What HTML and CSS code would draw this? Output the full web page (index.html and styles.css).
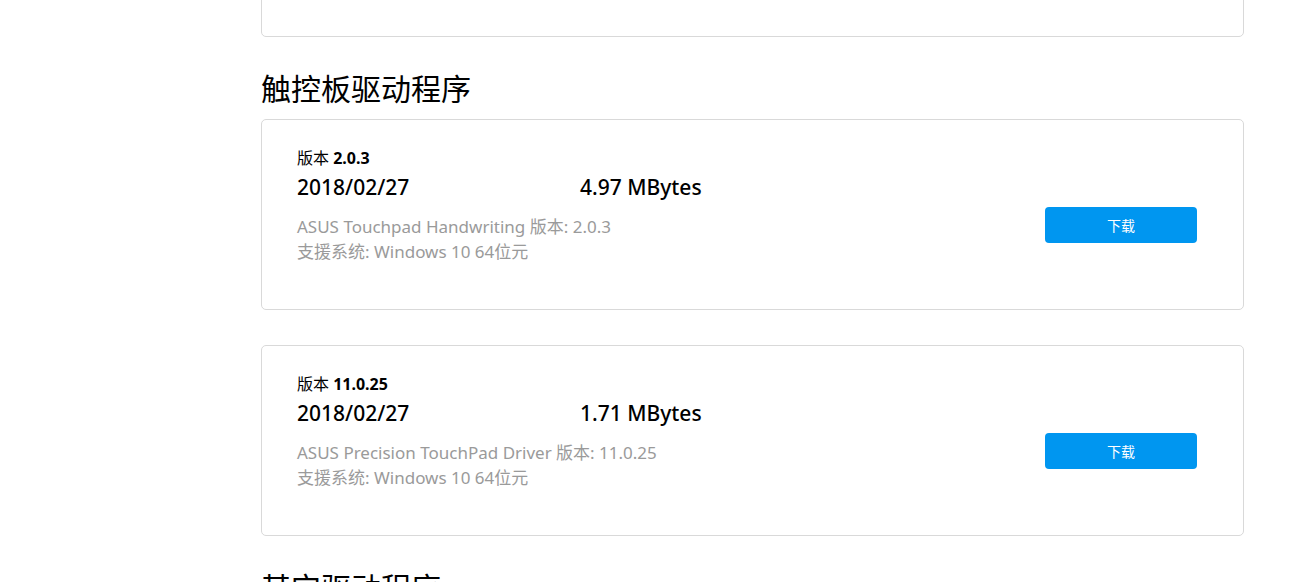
FILE: index.html
```html
<!DOCTYPE html>
<html lang="zh-CN">
<head>
    <meta charset="UTF-8">
    <meta name="viewport" content="width=device-width, initial-scale=1.0">
    <title>驱动程序下载</title>
    <link rel="stylesheet" href="styles.css">
</head>
<body>
    <div class="container">
        <!-- bottom of the previous section, scrolled past -->
        <div class="card card-partial"></div>

        <section class="driver-group">
            <h2>触控板驱动程序</h2>

            <div class="card">
                <div class="info">
                    <p class="version">版本 <b>2.0.3</b></p>
                    <div class="meta">
                        <span class="date">2018/02/27</span>
                        <span class="size">4.97 MBytes</span>
                    </div>
                    <p class="desc">ASUS Touchpad Handwriting 版本: 2.0.3<br>支援系统: Windows 10 64位元</p>
                </div>
                <button class="download-button">下载</button>
            </div>

            <div class="card">
                <div class="info">
                    <p class="version">版本 <b>11.0.25</b></p>
                    <div class="meta">
                        <span class="date">2018/02/27</span>
                        <span class="size">1.71 MBytes</span>
                    </div>
                    <p class="desc">ASUS Precision TouchPad Driver 版本: 11.0.25<br>支援系统: Windows 10 64位元</p>
                </div>
                <button class="download-button">下载</button>
            </div>
        </section>

        <section class="driver-group">
            <h2>其它驱动程序</h2>
        </section>
    </div>
</body>
</html>
```

FILE: styles.css
```css
/* Basic styling */
* { box-sizing: border-box; margin: 0; padding: 0; }
body { font-family: "Noto Sans", "Noto Sans CJK SC", sans-serif; background-color: #fff; color: #000; overflow: hidden; }
.container { width: 983px; margin-left: 261px; }

.card { display: flex; align-items: flex-start; min-height: 191px; padding: 28px 46px 0 35px; border: 1px solid #d9d9d9; border-radius: 5px; background-color: #fff; }
.card + .card { margin-top: 35px; }
.card-partial { min-height: 0; height: 197px; margin-top: -160px; }

.driver-group h2 { margin: 34px 0 12px; font-size: 30px; font-weight: 400; line-height: 36px; color: #000; }

.info { flex: 1; }
.version { font-size: 16px; line-height: 20px; }
.version b { font-weight: 700; }
.meta { display: flex; margin-top: 4px; font-size: 21px; font-weight: 500; line-height: 30px; }
.date { width: 283px; }
.desc { margin-top: 12px; font-size: 17px; line-height: 25px; color: #9a9a9a; }

.download-button { width: 152px; height: 36px; margin-top: 59px; font-family: inherit; font-size: 14px; color: #fff; background-color: #0096f0; border: none; border-radius: 4px; cursor: pointer; }
```
